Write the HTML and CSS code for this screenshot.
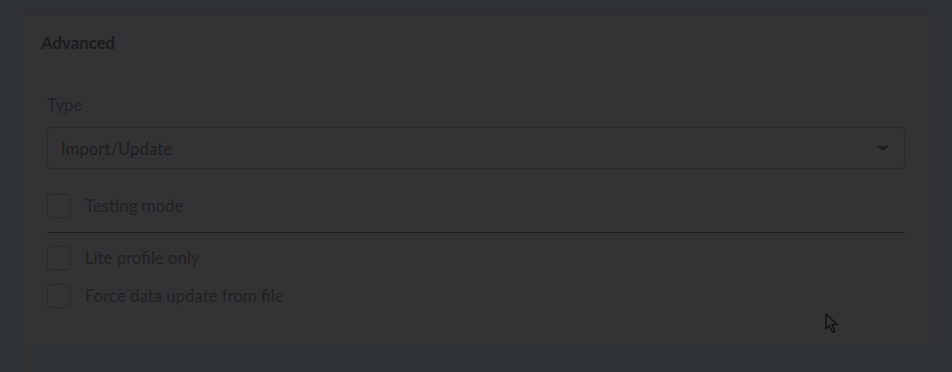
FILE: index.html
```html
<!DOCTYPE html>
<html lang="en">
<head>
    <meta charset="UTF-8">
    <meta name="viewport" content="width=device-width, initial-scale=1.0">
    <title>Import settings - Advanced</title>
    <link rel="stylesheet" href="styles.css">
</head>
<body>
    <div class="card">
        <div class="card-header">
            <h2>Advanced</h2>
        </div>

        <div class="card-body">
            <div class="form-group">
                <label for="type">Type</label>
                <div class="select">
                    <span>Import/Update</span>
                    <span class="caret"></span>
                </div>
            </div>

            <label class="check">
                <span class="box"></span>
                <span>Testing mode</span>
            </label>

            <div class="divider"></div>

            <label class="check">
                <span class="box"></span>
                <span>Lite profile only</span>
            </label>

            <label class="check check-tight">
                <span class="box"></span>
                <span>Force data update from file</span>
            </label>
        </div>
    </div>

    <div class="next-card"></div>

    <!-- mouse pointer left on the page -->
    <svg class="pointer" width="14" height="22" viewBox="0 0 14 22">
        <path d="M1 1 L1 16 L4.5 12.5 L7.5 19.5 L10 18.5 L7 11.5 L12 11.5 Z" fill="#333335" stroke="#0e0e0e" stroke-width="1.2" stroke-linejoin="round"/>
    </svg>
</body>
</html>
```

FILE: styles.css
```css
* {
    margin: 0;
    padding: 0;
    box-sizing: border-box;
    font-family: 'Lato', 'Open Sans', sans-serif;
}

body {
    background-color: #2e3235;
    width: 952px;
    height: 372px;
    overflow: hidden;
    position: relative;
}

.card {
    margin: 15px 0 0 21px;
    width: 909px;
    height: 331px;
    background-color: #333335;
    border: 1px solid #2f2f31;
    border-radius: 2px;
}

.card-header {
    padding: 16px 19px 0;
}

.card-header h2 {
    font-size: 16.8px;
    font-weight: 700;
    color: #1b1b1d;
    line-height: 22px;
}

.card-body {
    padding: 39px 24px 0 25px;
}

.form-group label {
    display: block;
    font-size: 16.8px;
    color: #212123;
    line-height: 24px;
    margin-bottom: 10px;
}

.select {
    height: 42px;
    display: flex;
    align-items: center;
    justify-content: space-between;
    padding: 0 15px 0 13px;
    border: 1px solid #2b2b2d;
    border-radius: 4px;
    font-size: 16.8px;
    color: #1e1e20;
}

.caret {
    width: 0;
    height: 0;
    border-left: 6px solid transparent;
    border-right: 6px solid transparent;
    border-top: 5px solid #1d1d1f;
}

.check {
    display: flex;
    align-items: center;
    gap: 14px;
    margin-top: 25px;
    font-size: 16.8px;
    color: #212123;
    line-height: 24px;
}

.check-tight {
    margin-top: 14px;
}

.box {
    width: 24px;
    height: 24px;
    border: 1px solid #2a2a2c;
    border-radius: 3px;
}

.divider {
    height: 1px;
    background-color: #1f1f1f;
    margin-top: 14px;
    margin-bottom: -12px;
}

.next-card {
    margin-left: 22px;
    width: 9px;
    height: 26px;
    background-color: #2f3132;
}

.pointer {
    position: absolute;
    left: 825px;
    top: 313px;
}
```
